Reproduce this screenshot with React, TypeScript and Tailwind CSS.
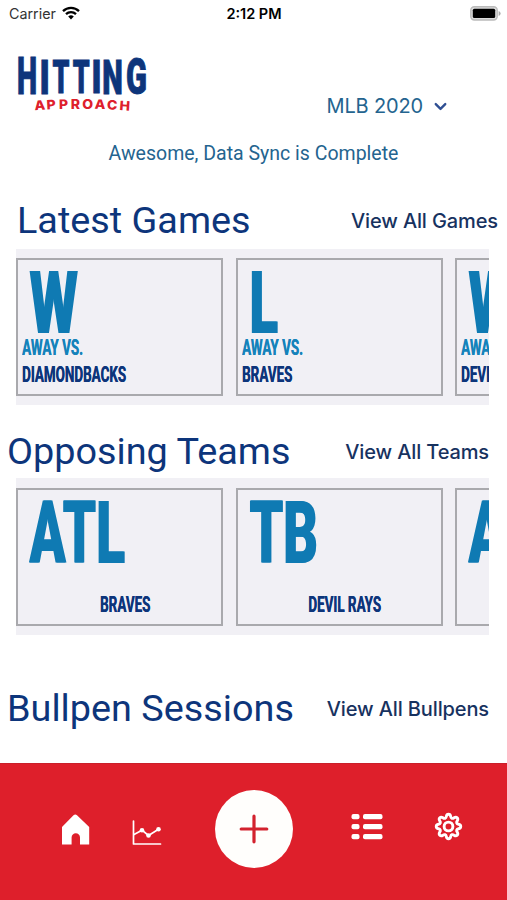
import React from 'react';
import { ChevronDown } from 'lucide-react';

interface Game {
  result: string;
  venue: string;
  opponent: string;
  resultScale: string;
}

interface Team {
  code: string;
  name: string;
  codeScale: string;
}

const games: Game[] = [
  { result: 'W', venue: 'Away vs.', opponent: 'Diamondbacks', resultScale: 'scale-x-[0.635]' },
  { result: 'L', venue: 'Away vs.', opponent: 'Braves', resultScale: 'scale-x-[0.6]' },
  { result: 'W', venue: 'Away vs.', opponent: 'Devil Rays', resultScale: 'scale-x-[0.635]' },
];

const teams: Team[] = [
  { code: 'ATL', name: 'Braves', codeScale: 'scale-x-[0.605]' },
  { code: 'TB', name: 'Devil Rays', codeScale: 'scale-x-[0.61]' },
  { code: 'ARI', name: 'Diamondbacks', codeScale: 'scale-x-[0.61]' },
];

// x, baseline, font size and horizontal squeeze of every logo letter
const logoTop = [
  { char: 'H', x: 17, y: 94.3, size: 51, squeeze: 0.56 },
  { char: 'I', x: 39.6, y: 93.5, size: 47.5, squeeze: 0.72 },
  { char: 'T', x: 52.5, y: 93, size: 45.5, squeeze: 0.59 },
  { char: 'T', x: 72.7, y: 93, size: 45.5, squeeze: 0.59 },
  { char: 'I', x: 91.5, y: 93.2, size: 46, squeeze: 0.72 },
  { char: 'N', x: 102.2, y: 93.5, size: 48, squeeze: 0.61 },
  { char: 'G', x: 126, y: 94, size: 49.5, squeeze: 0.62 },
];

const logoBottom = [
  { char: 'A', x: 34.8, y: 110.2, turn: -4 },
  { char: 'P', x: 46.8, y: 109.5, turn: -3 },
  { char: 'P', x: 59, y: 108.9, turn: -1 },
  { char: 'R', x: 70.7, y: 108.6, turn: 0 },
  { char: 'O', x: 82.3, y: 108.6, turn: 0 },
  { char: 'A', x: 94.6, y: 108.8, turn: 2 },
  { char: 'C', x: 106.8, y: 109.3, turn: 3 },
  { char: 'H', x: 119.2, y: 109.9, turn: 4 },
];

const Logo = () => (
  <svg width="160" height="64" viewBox="0 52 160 64" className="shrink-0 overflow-visible">
    <g fill="#0d357b" stroke="#0d357b" strokeWidth="1" fontFamily="Roboto, sans-serif" fontWeight="900">
      {logoTop.map((l, i) => (
        <text key={i} fontSize={l.size} transform={`translate(${l.x} ${l.y}) scale(${l.squeeze} 1)`}>{l.char}</text>
      ))}
    </g>
    <g fill="#de202c" fontFamily="Inter, sans-serif" fontWeight="800" fontSize="13">
      {logoBottom.map((l, i) => (
        <text key={i} transform={`translate(${l.x} ${l.y}) rotate(${l.turn}) scale(1.08 1)`}>{l.char}</text>
      ))}
    </g>
  </svg>
);

const StatusBar = () => (
  <div className="h-7 grid grid-cols-3 items-center pl-[9px] pr-[8px] font-[Inter,sans-serif] text-black">
    <div className="flex items-center gap-1.5 text-[14.3px] text-[#333]">
      <span>Carrier</span>
      <svg width="18" height="14" viewBox="0 0 18 14" fill="none" stroke="#000" strokeWidth="2.3" className="-mt-0.5">
        <path d="M1 5.2a11.5 11.5 0 0 1 16 0" />
        <path d="M4 8.2a7.2 7.2 0 0 1 10 0" />
        <path d="M6.2 10.6a4 4 0 0 1 5.6 0L9 13.5z" fill="#000" stroke="none" />
      </svg>
    </div>
    <div className="text-center text-[14.5px] font-semibold whitespace-nowrap">2:12 PM</div>
    <svg width="31" height="15" viewBox="0 0 31 15" className="justify-self-end -mt-0.5 translate-x-[2px]">
      <rect x="0.8" y="0.8" width="26.4" height="13.2" rx="3.5" fill="#ddd" stroke="#bbb" strokeWidth="1.4" />
      <rect x="2.8" y="2.8" width="22.4" height="9.2" rx="1.5" fill="#000" />
      <path d="M28.6 5v5q2-.8 2-2.5t-2-2.5z" fill="#aaa" />
    </svg>
  </div>
);

const SectionTitle = ({ title, link, className }: { title: string; link: string; className: string }) => (
  <div className={`flex items-center justify-between whitespace-nowrap ${className}`}>
    <h2 className="font-[Roboto,sans-serif] text-[37.8px] leading-[56px] -mt-0.5 text-[#0d357b]">{title}</h2>
    <button className="font-[Inter,sans-serif] text-[20px] tracking-[-0.12px] font-medium text-[#17325f]">{link}</button>
  </div>
);

const Card = ({ children }: { children: React.ReactNode }) => (
  <div className="shrink-0 w-[207px] h-[138px] border-2 border-[#a9a9ad] font-[Roboto,sans-serif] font-bold uppercase whitespace-nowrap">
    {children}
  </div>
);

const GameCard = ({ game }: { game: Game }) => (
  <Card>
    <div className="mt-[7px] pl-[11px] text-[88px] leading-[72px] font-black text-[#0f7ab3] [text-shadow:1.5px_0_currentColor]">
      <span className={`inline-block origin-left ${game.resultScale}`}>{game.result}</span>
    </div>
    <div className="mt-px pl-1 text-[22px] leading-[16px] text-[#1583bb] [text-shadow:0.4px_0_currentColor]">
      <span className="inline-block origin-left scale-x-[0.61]">{game.venue}</span>
    </div>
    <div className="mt-[11px] pl-1 text-[22px] leading-[16px] text-[#0d357b] [text-shadow:0.4px_0_currentColor]">
      <span className="inline-block origin-left scale-x-[0.61]">{game.opponent}</span>
    </div>
  </Card>
);

const TeamCard = ({ team }: { team: Team }) => (
  <Card>
    <div className="mt-[7px] pl-[11px] text-[88px] leading-[72px] font-black text-[#0f7ab3] [text-shadow:1.5px_0_currentColor]">
      <span className={`inline-block origin-left ${team.codeScale}`}>{team.code}</span>
    </div>
    <div className="mt-7 pl-3 text-center text-[22px] leading-[16px] text-[#0d357b] [text-shadow:0.4px_0_currentColor]">
      <span className="inline-block scale-x-[0.61]">{team.name}</span>
    </div>
  </Card>
);

const TabBar = () => (
  <nav className="h-[137px] bg-[#de1f2b] border-t border-[#c91f2a] pt-[26px] pl-[60px] flex items-start">
    <button className="mt-[24px]">
      <svg width="30" height="32" viewBox="0 0 30 32" fill="#fff">
        <path d="M15.300 .5Q16.200 .5 17 1.300L29.200 13V30.500H20V23.500a4.200 4.200 0 0 0-8.400 0V30.500H2V13L13.500 1.300Q14.300 .5 15.300 .5z" />
      </svg>
    </button>
    <button className="mt-[30px] ml-[42px]">
      <svg width="30" height="26" viewBox="0 0 30 26" fill="none" stroke="#fff" strokeWidth="1.7" strokeLinecap="round" strokeLinejoin="round">
        <path d="M1.500 1V24H28.500" />
        <path d="M2 14.500 10 10.200 16.500 15.500 26.500 9.200" />
        <g fill="#fff" stroke="none">
          <circle cx="10" cy="10.200" r="2.300" />
          <circle cx="16.500" cy="15.500" r="2.300" />
          <circle cx="26.500" cy="9.200" r="2.300" />
        </g>
      </svg>
    </button>
    <button className="ml-[53px] w-[78px] h-[78px] rounded-full bg-[#fffefc] flex items-center justify-center">
      <svg width="30" height="30" viewBox="0 0 30 30" stroke="#d3222e" strokeWidth="3.2" strokeLinecap="round">
        <path d="M15 2.200V27.800M2.200 15H27.800" />
      </svg>
    </button>
    <button className="mt-[23px] ml-[58px]">
      <svg width="32" height="27" viewBox="0 0 32 27" fill="#fff">
        {[1, 11, 21].map((y) => (
          <g key={y}>
            <rect x="0.5" y={y} width="8" height="5.200" rx="2" />
            <rect x="12" y={y} width="19.500" height="5.200" rx="2" />
          </g>
        ))}
      </svg>
    </button>
    <button className="mt-[21px] ml-[49px]">
      <svg width="32" height="32" viewBox="0 0 32 32" fill="none" stroke="#fff" strokeWidth="2.900" strokeLinejoin="round">
        <path d="M14.300 5.500C14.800 2.500 18.200 2.500 18.700 5.500C19 7.400 20.600 7.900 22 6.800C24.600 5.200 26.800 7.400 25.200 10C24.100 11.400 24.600 13 26.500 13.300C29.500 13.800 29.500 17.200 26.500 17.700C24.600 18 24.100 19.600 25.200 21C26.800 23.600 24.600 25.800 22 24.200C20.600 23.100 19 23.600 18.700 25.500C18.200 28.500 14.800 28.500 14.300 25.500C14 23.600 12.400 23.100 11 24.200C8.400 25.800 6.200 23.600 7.800 21C8.900 19.600 8.400 18 6.500 17.700C3.500 17.200 3.500 13.800 6.500 13.300C8.400 13 8.900 11.400 7.800 10C6.200 7.400 8.400 5.200 11 6.800C12.400 7.900 14 7.400 14.300 5.500z" />
        <circle cx="16.500" cy="15.500" r="4.400" />
      </svg>
    </button>
  </nav>
);

export default function App() {
  return (
    <div className="w-[507px] h-[900px] flex flex-col overflow-hidden bg-white">
      <StatusBar />

      {/* Header */}
      <header className="h-[96px] flex items-start justify-between pt-6 pr-[57px]">
        <Logo />
        <button className="mt-10 flex items-center gap-2 font-[Inter,sans-serif] text-[20px] leading-[28px] tracking-[-0.15px] text-[#24648f]">
          MLB 2020
          <ChevronDown size={19} strokeWidth={3} color="#2f4f93" />
        </button>
      </header>

      <p className="h-[58px] leading-[59px] text-center font-[Roboto,sans-serif] text-[19.5px] text-[#24648f]">
        Awesome, Data Sync is Complete
      </p>

      {/* Games */}
      <SectionTitle title="Latest Games" link="View All Games" className="h-[67px] pt-[10px] pl-[17px] pr-[9px]" />
      <div className="mx-4 mr-[18px] h-[156px] pt-[9px] flex gap-[12.5px] overflow-hidden bg-[#f1f0f5]">
        {games.map((game, i) => <GameCard key={i} game={game} />)}
      </div>

      {/* Teams */}
      <SectionTitle title="Opposing Teams" link="View All Teams" className="h-[73px] pt-5 pl-[7px] pr-[18px]" />
      <div className="mx-4 mr-[18px] h-[157px] pt-[10px] flex gap-[12.5px] overflow-hidden bg-[#f1f0f5]">
        {teams.map((team) => <TeamCard key={team.code} team={team} />)}
      </div>

      {/* Bullpens */}
      <SectionTitle title="Bullpen Sessions" link="View All Bullpens" className="h-[128px] pt-5 pl-[7px] pr-[18px]" />

      <TabBar />
    </div>
  );
}
